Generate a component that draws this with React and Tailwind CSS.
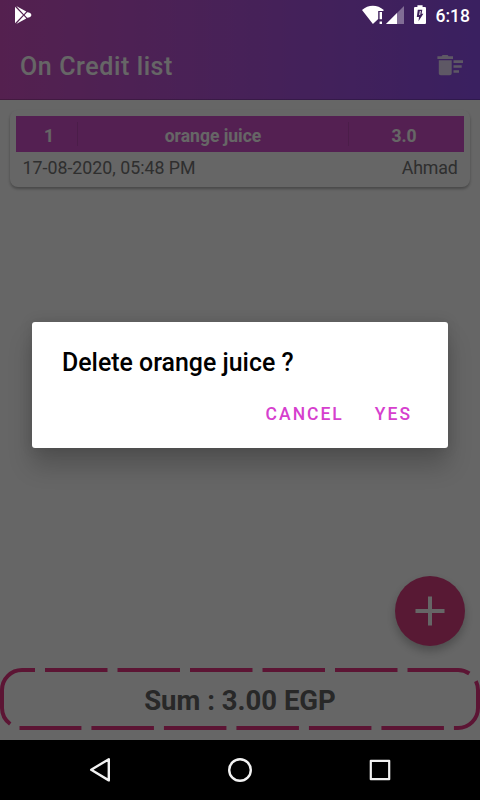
const item = {
  id: 1,
  name: 'orange juice',
  price: '3.0',
  date: '17-08-2020, 05:48 PM',
  customer: 'Ahmad',
};

function StatusBar() {
  return (
    <div className="absolute inset-x-0 top-0 z-20 flex h-9 items-start text-white">
      <svg className="ml-[15px] mt-[6px]" width="17" height="19" viewBox="0 0 17 19">
        <path d="M0 .8 8 9 0 17.2z" fill="#fff" />
        <path d="M1.2 0 11.3 5.6 8.8 8.2zM1.2 18 11.3 12.4 8.8 9.8zM12.2 6.2C14.5 6.2 16.4 7.4 16.4 9S14.5 11.8 12.2 11.8L9.6 9z" fill="#fff" />
      </svg>
      <div className="flex-1" />
      <svg className="mt-[5px]" width="66" height="20" viewBox="0 0 66 20">
        <path d="M0 5C6.2-.8 15.5-.8 21.8 5l-.6.9h-5v8.2L10.9 19z" fill="#fff" />
        <path d="M17.6 7H20v7.2h-2.4zM17.6 16.4H20V19h-2.4z" fill="#fff" />
        <path d="M24 19 42 1v18z" fill="#fff" fillOpacity=".35" />
        <path d="M24 19 35 8v11z" fill="#fff" />
        <path d="M55.4.2h5.2V2h2.1c.8 0 1.3.5 1.3 1.3v14.4c0 .8-.5 1.3-1.3 1.3h-9.4c-.8 0-1.3-.5-1.3-1.3V3.3c0-.8.5-1.3 1.3-1.3h2.1z" fill="#fff" />
        <path d="M60.3 4.8 59.6 8.700h1.800l-4.900 7.500.5-4.300h-2.200l1-7.100z" fill="#3c2059" />
        <path d="M58.300 6 57.700 10" stroke="#fff" strokeWidth="1" />
      </svg>
      <span className="ml-[8px] mr-[10px] mt-[4px] text-[17.5px] font-medium leading-6">6:18</span>
    </div>
  );
}

function Header() {
  return (
    <header className="flex h-[100px] items-end justify-between border-b border-black/20 bg-linear-to-r from-[#d252c6] to-[#9150f0] pl-5 pr-[17px]">
      <h1 className="mb-[16px] text-[25px] font-medium leading-8 tracking-[0.6px] text-white">On Credit list</h1>
      <svg className="mb-[23px]" width="26" height="21" viewBox="0 0 26 21" fill="#fff" fillOpacity=".8">
        <path d="M.4 1.2h4.200L5.600 0h5l1 1.200H16v2.700H.4zM1.800 5.200h12.900v13c0 1.200-.8 2-2 2H3.800c-1.200 0-2-.8-2-2z" />
        <path d="M16.500 5.200H26v2.700h-9.500zM16.500 10.200h8.200v2.600h-8.200zM16.500 15.200H22v2.600h-5.500z" />
      </svg>
    </header>
  );
}

function ItemCard({ item }) {
  return (
    <div className="mx-[10px] mt-[10px] h-[77px] rounded-lg bg-white px-[6px] pt-[6px] shadow-[0_2px_3px_rgba(0,0,0,0.3)]">
      <div className="flex h-9 items-center bg-[#d252cc] text-center text-[17.5px] font-bold leading-6 text-white">
        <span className="w-[61px] pl-[5px] pt-[3px]">{item.id}</span>
        <span className="h-6 w-px bg-black/10" />
        <span className="flex-1 pt-[3px]">{item.name}</span>
        <span className="h-6 w-px bg-black/10" />
        <span className="w-[115px] pr-[5px] pt-[3px]">{item.price}</span>
      </div>
      <div className="flex justify-between px-[6.500px] pt-[4px] text-[17.8px] leading-6 text-[#757575]">
        <span>{item.date}</span>
        <span className="tracking-[-0.2px]">{item.customer}</span>
      </div>
    </div>
  );
}

function SumBar() {
  return (
    <div className="relative flex h-[72px] items-start justify-center">
      <svg className="absolute left-0 top-0" width="480" height="64" viewBox="0 0 480 64" fill="none" stroke="#e53583" strokeWidth="4">
        <path d="M45 2H458A20 20 0 0 1 478 22V40A20 20 0 0 1 458 60H19.5" strokeDasharray="62.5 10" />
        <path d="M10.2 56A20 20 0 0 1 2 40V22A20 20 0 0 1 22 2H35" />
      </svg>
      <span className="mt-[15px] text-[27.5px] font-bold leading-9 text-[#646464]">Sum : 3.00 EGP</span>
    </div>
  );
}

function NavBar() {
  return (
    <nav className="flex h-[60px] items-center justify-between bg-black px-[88px]">
      <svg width="24" height="28" viewBox="0 0 24 28" fill="none" stroke="#f2f2f2" strokeWidth="2.4" strokeLinejoin="round">
        <path d="M20.8 3.2v21.2L3.2 13.8z" />
      </svg>
      <svg width="26" height="26" viewBox="0 0 26 26" fill="none" stroke="#f2f2f2" strokeWidth="2.4">
        <circle cx="13" cy="13" r="10.8" />
      </svg>
      <svg width="24" height="24" viewBox="0 0 24 24" fill="none" stroke="#f2f2f2" strokeWidth="2.2" strokeLinejoin="round">
        <rect x="2.8" y="2.8" width="18.4" height="18.4" />
      </svg>
    </nav>
  );
}

function DeleteDialog({ name }) {
  return (
    <div className="absolute inset-x-0 bottom-[60px] top-0 z-10 flex items-center justify-center bg-black/60 pt-[30px]">
      <div className="h-[126px] w-[416px] rounded-[3px] bg-white px-[30px] pt-[25px] shadow-[0_18px_24px_rgba(0,0,0,0.2),0_0_14px_rgba(0,0,0,0.12)]">
        <h2 className="text-[24.9px] font-medium leading-8 text-black">Delete {name} ?</h2>
        <div className="mt-[23px] flex justify-end gap-[31px] pr-[6px] text-[17.5px] font-medium leading-6 tracking-[2px] text-[#d640ce]">
          <button>CANCEL</button>
          <button>YES</button>
        </div>
      </div>
    </div>
  );
}

export default function App() {
  return (
    <div className="relative flex h-[800px] w-[480px] flex-col overflow-hidden bg-white font-['Roboto',sans-serif]">
      <StatusBar />
      <Header />
      <main className="flex flex-1 flex-col justify-between">
        <ItemCard item={item} />
        <button className="mb-[22px] mr-[15px] flex size-[70px] items-center justify-center self-end rounded-full bg-[#dc4082] shadow-[0_5px_10px_rgba(0,0,0,0.25)]">
          <svg width="30" height="30" viewBox="0 0 30 30" stroke="#fff" strokeWidth="4">
            <path d="M15 .5v29M.5 15h29" />
          </svg>
        </button>
      </main>
      <SumBar />
      <NavBar />
      <DeleteDialog name={item.name} />
    </div>
  );
}
